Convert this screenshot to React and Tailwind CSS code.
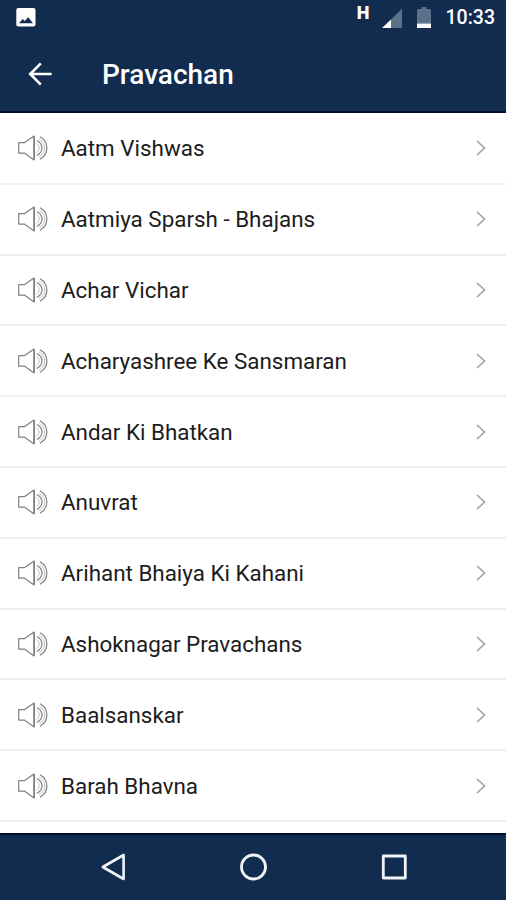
const TRACKS = [
  'Aatm Vishwas',
  'Aatmiya Sparsh - Bhajans',
  'Achar Vichar',
  'Acharyashree Ke Sansmaran',
  'Andar Ki Bhatkan',
  'Anuvrat',
  'Arihant Bhaiya Ki Kahani',
  'Ashoknagar Pravachans',
  'Baalsanskar',
  'Barah Bhavna',
];

const SpeakerIcon = () => (
  <svg
    className="w-8 h-7 shrink-0"
    viewBox="0 0 32 28"
    fill="none"
    stroke="#808080"
    strokeWidth="1.2"
    strokeLinejoin="round"
    strokeLinecap="round"
  >
    <path d="M1.7 8.6h6L17 2v24L7.7 19.2h-6z" />
    <path d="M17.2 3v22" strokeWidth="1.5" />
    <path d="M19.8 9.6c3.2 2.2 3.2 6.6 0 8.8" strokeWidth="0.9" stroke="#b5b5b5" />
    <path d="M20.2 6.8c6.4 3.6 6.4 10.8 0 14.4" strokeWidth="1.2" />
    <path d="M22.6 5.4c7 4 7 13.2 0 17.2" strokeWidth="0.9" stroke="#b5b5b5" />
    <path d="M23.4 3c8.6 5 8.6 17 0 22" strokeWidth="1.2" />
  </svg>
);

const StatusBar = () => (
  <div className="h-9 shrink-0 flex items-center justify-between pl-4 pr-[11px]">
    <svg className="w-5 h-5" viewBox="0 0 20 20">
      <rect x="0.3" y="0" width="19.2" height="18.6" rx="2" fill="#fff" />
      <path d="M3 15.2l3.6-4.2 2.2 2 3.4-3.8 4.8 6z" fill="#112c4e" />
    </svg>
    <div className="flex items-center text-white">
      <span className="text-[18px] leading-4 font-black mr-3 mb-[10px]">H</span>
      <svg className="w-5 h-5 mr-[15px]" viewBox="0 0 20 20">
        <path d="M20 0.5v20H0z" fill="#5b7089" />
        <path d="M9 11.5V20H0z" fill="#fff" />
      </svg>
      <svg className="w-[14px] h-[22px] mr-[15px]" viewBox="0 0 14 22">
        <path d="M4.5 0h5v2H13l1 1v18H0V3l1-1h3.5z" fill="#5b7089" />
        <path d="M0 16.6h14V21H0z" fill="#fff" />
      </svg>
      <span className="text-[19.5px] leading-6 font-medium">10:33</span>
    </div>
  </div>
);

const AppBar = () => (
  <div className="flex-1 flex items-center pl-7 pt-px">
    <svg
      className="w-6 h-6 mr-[50px]"
      viewBox="0 0 24 24"
      fill="none"
      stroke="#fff"
      strokeWidth="2.6"
    >
      <path d="M23.6 12H2.5M12.8 1.4L2.2 12l10.6 10.6" />
    </svg>
    <h1 className="pt-0.5 text-[28px] leading-8 font-medium text-white">Pravachan</h1>
  </div>
);

const TrackRow = ({ title }) => (
  <li className="h-[70.8px] flex items-center pl-[17px] pr-[19px] border-b-2 border-[#efefef]">
    <SpeakerIcon />
    <span className="flex-1 ml-3 text-[22.4px] leading-7 text-[#1c1c1c]">{title}</span>
    <svg
      className="w-3 h-4 shrink-0"
      viewBox="0 0 12 16"
      fill="none"
      stroke="#a3a3a3"
      strokeWidth="1.7"
    >
      <path d="M2 1l7.5 7L2 15" />
    </svg>
  </li>
);

const NavBar = () => (
  <nav className="h-[67px] shrink-0 flex items-center justify-between pl-[100px] pr-[98px] pb-0.5 bg-[#112c4e] border-t-2 border-[#020d30]">
    <svg className="w-7 h-7" viewBox="0 0 28 28" fill="none" stroke="#f1f3f8" strokeWidth="2.6" strokeLinejoin="round">
      <path d="M23.6 2v24L2.8 14z" />
    </svg>
    <svg className="w-7 h-7" viewBox="0 0 28 28" fill="none" stroke="#f1f3f8" strokeWidth="2.8">
      <circle cx="13.5" cy="14" r="12" />
    </svg>
    <svg className="w-7 h-7" viewBox="0 0 28 28" fill="none" stroke="#f1f3f8" strokeWidth="2.8" strokeLinejoin="round">
      <rect x="3.3" y="3" width="22" height="22" />
    </svg>
  </nav>
);

export default function App() {
  return (
    <div className="w-[506px] h-[900px] flex flex-col overflow-hidden bg-white font-['Roboto',sans-serif]">
      <header className="h-[113px] shrink-0 flex flex-col bg-[#112c4e] border-b-2 border-[#020d30]">
        <StatusBar />
        <AppBar />
      </header>
      <ul className="flex-1 min-h-0 pt-px">
        {TRACKS.map((title) => (
          <TrackRow key={title} title={title} />
        ))}
      </ul>
      <NavBar />
    </div>
  );
}
